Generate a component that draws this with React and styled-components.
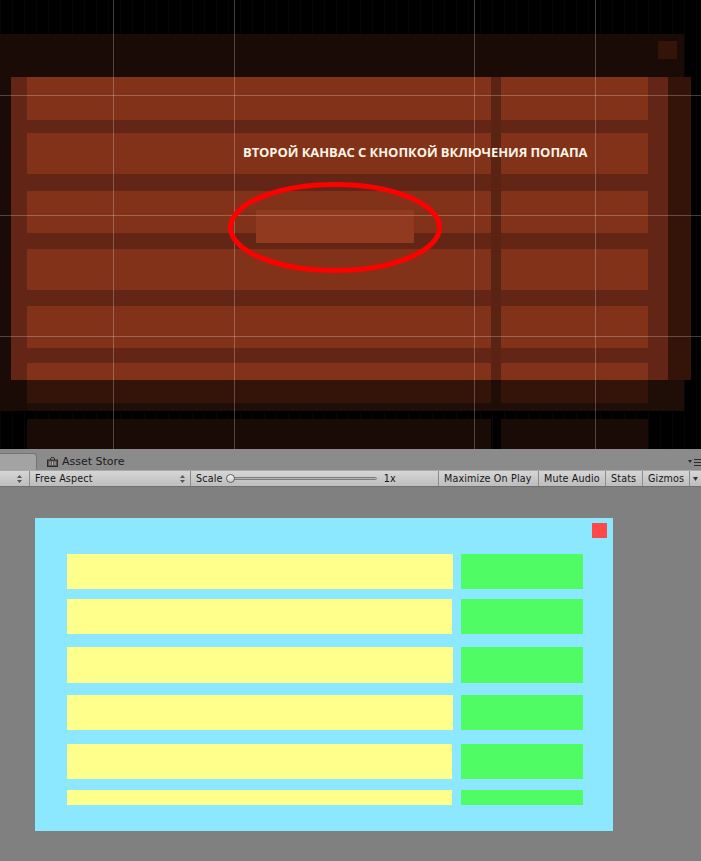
import React from 'react';
import styled, { createGlobalStyle } from 'styled-components';

const GlobalStyle = createGlobalStyle`
  html, body {
    margin: 0;
    padding: 0;
    background: #808080;
  }
  body {
    width: 701px;
    height: 861px;
    overflow: hidden;
    font-family: "DejaVu Sans", "Liberation Sans", sans-serif;
  }
`;

const Page = styled.div`
  display: flex;
  flex-direction: column;
  width: 701px;
  height: 861px;
`;

/* ---------- scene view (free canvas) ---------- */

const Scene = styled.div`
  position: relative;
  flex: none;
  height: 449px;
  background-color: #000;
  background-image: repeating-linear-gradient(90deg, rgba(255,255,255,0.025) 0 1px, transparent 1px 12px);
  overflow: hidden;
`;

const Layer = styled.div`
  position: absolute;
  left: ${p => p.$x}px;
  top: ${p => p.$y}px;
  width: ${p => p.$w}px;
  height: ${p => p.$h}px;
  background: ${p => p.$c};
`;

const SceneRows = styled.div`
  position: absolute;
  left: 27px;
  top: 77px;
  display: flex;
  flex-direction: column;
`;

const SceneRow = styled.div`
  display: flex;
  gap: 10px;
  height: ${p => p.$h}px;
  margin-top: ${p => p.$mt}px;
`;

const tones = {
  lit: '#813219',
  split: 'linear-gradient(#813219 0 17px, #341409 17px)',
  dim: '#1a0b07',
};

const SceneCell = styled.div`
  width: ${p => p.$w}px;
  background: ${p => tones[p.$tone]};
`;

const SceneButton = styled.div`
  position: absolute;
  left: 256px;
  top: 210px;
  width: 158px;
  height: 33px;
  background: #923a1f;
`;

const Caption = styled.div`
  position: absolute;
  left: 243px;
  top: 143px;
  font-family: "Open Sans", "Noto Sans", sans-serif;
  font-weight: 700;
  font-size: 13px;
  letter-spacing: -0.08px;
  line-height: 18px;
  color: #fff4e4;
  white-space: nowrap;
`;

const Overlay = styled.svg`
  position: absolute;
  left: 0;
  top: 0;
  pointer-events: none;
`;

const sceneRows = [
  { h: 43, mt: 0, tone: 'lit' },
  { h: 41, mt: 13, tone: 'lit' },
  { h: 42, mt: 17, tone: 'lit' },
  { h: 41, mt: 16, tone: 'lit' },
  { h: 42, mt: 16, tone: 'lit' },
  { h: 40, mt: 15, tone: 'split' },
  { h: 40, mt: 16, tone: 'dim' },
];

/* ---------- editor tabs and toolbar ---------- */

const TabBar = styled.div`
  position: relative;
  flex: none;
  display: flex;
  align-items: flex-end;
  height: 21px;
  background: #8b8b8b;
`;

const Tab = styled.div`
  display: flex;
  align-items: center;
  gap: 4px;
  height: 17px;
  box-sizing: border-box;
  padding: 0 ${p => p.$pad}px;
  width: ${p => (p.$w ? `${p.$w}px` : 'auto')};
  background: ${p => (p.$active ? '#a3a3a3' : 'transparent')};
  border: ${p => (p.$active ? '1px solid #747474' : 'none')};
  border-left: none;
  border-bottom: none;
  border-top-right-radius: 4px;
  font-size: 11px;
  color: #1b1b1b;
`;

const TabMenu = styled.div`
  position: absolute;
  right: 0;
  top: 10px;
  display: flex;
  align-items: center;
`;

const Toolbar = styled.div`
  flex: none;
  display: flex;
  align-items: stretch;
  height: 17px;
  box-sizing: border-box;
  background: linear-gradient(#d6d6d6, #bdbdbd);
  border-top: 1px solid #a9a9a9;
  border-bottom: 1px solid #6f6f6f;
  font-size: 9.6px;
  letter-spacing: 0.15px;
  color: #151515;
`;

const ToolItem = styled.div`
  display: flex;
  align-items: center;
  justify-content: ${p => p.$justify || 'flex-start'};
  gap: 4px;
  width: ${p => p.$w}px;
  flex: none;
  box-sizing: border-box;
  padding: 0 ${p => p.$pad ?? 5}px;
  border-right: ${p => (p.$sep ? '1px solid #8c8c8c' : 'none')};
  white-space: nowrap;
  overflow: hidden;
`;

const Grow = styled.div`
  flex: 1;
`;

const SliderTrack = styled.div`
  position: relative;
  width: 150px;
  height: 3px;
  border-radius: 2px;
  background: linear-gradient(#8a8a8a, #d8d8d8);
  border: 1px solid #7c7c7c;
  box-sizing: border-box;
`;

const Knob = styled.div`
  position: absolute;
  left: -2px;
  top: -4px;
  width: 9px;
  height: 9px;
  border-radius: 50%;
  box-sizing: border-box;
  border: 1px solid #5d5d5d;
  background: linear-gradient(#f4f4f4, #c9c9c9);
`;

/* ---------- game view ---------- */

const GameView = styled.div`
  flex: 1;
  background: #808080;
  padding: 31px 0 0 35px;
`;

const Panel = styled.div`
  position: relative;
  width: 578px;
  height: 313px;
  box-sizing: border-box;
  padding: 36px 0 0 32px;
  background: #8be8ff;
  overflow: hidden;
`;

const CloseButton = styled.div`
  position: absolute;
  top: 5px;
  right: 6px;
  width: 15px;
  height: 15px;
  background: #ff4848;
`;

const RowList = styled.div`
  display: flex;
  flex-direction: column;
  width: 516px;
`;

const Row = styled.div`
  display: flex;
  justify-content: space-between;
  height: ${p => p.$h}px;
  margin-top: ${p => p.$mt}px;
`;

const Label = styled.div`
  width: ${p => p.$w}px;
  background: #ffff8c;
`;

const Action = styled.div`
  width: 122px;
  background: #50fc64;
`;

const rows = [
  { h: 35, mt: 0, w: 386 },
  { h: 35, mt: 10, w: 385 },
  { h: 36, mt: 13, w: 386 },
  { h: 35, mt: 12, w: 386 },
  { h: 35, mt: 14, w: 385 },
  { h: 15, mt: 11, w: 385 },
];

const UpDown = () => (
  <svg width="5" height="8" viewBox="0 0 5 8">
    <path d="M0 3 L2.5 0 L5 3 Z M0 5 L2.5 8 L5 5 Z" fill="#555" />
  </svg>
);

const StoreIcon = () => (
  <svg width="11" height="10" viewBox="0 0 11 10">
    <path d="M3.5 3 V1.5 Q3.5 0.5 5.5 0.5 Q7.5 0.5 7.5 1.5 V3" fill="none" stroke="#2a2a2a" strokeWidth="1" />
    <rect x="0.5" y="3" width="10" height="6.5" fill="#5a5a5a" stroke="#2a2a2a" />
    <path d="M3 4.5 V8 M5.5 4.5 V8 M8 4.5 V8" stroke="#b5b5b5" strokeWidth="1" />
  </svg>
);

const MenuIcon = () => (
  <svg width="13" height="7" viewBox="0 0 13 7">
    <path d="M0 1 L4 1 L2 4 Z" fill="#2b2b2b" />
    <path d="M6 0.5 H13 M6 3.5 H13 M6 6.5 H13" stroke="#2b2b2b" strokeWidth="1" />
  </svg>
);

export default function App() {
  return (
    <Page>
      <GlobalStyle />
      <Scene>
        <Layer $x={0} $y={34} $w={684} $h={377} $c="#1a0b07" />
        <Layer $x={27} $y={380} $w={657} $h={31} $c="#1f0d08" />
        <Layer $x={668} $y={77} $w={23} $h={303} $c="#341409" />
        <Layer $x={658} $y={41} $w={19} $h={18} $c="#341409" />
        <Layer $x={11} $y={77} $w={657} $h={303} $c="#632616" />
        <Layer $x={491} $y={77} $w={10} $h={303} $c="#5b2314" />
        <SceneRows>
          {sceneRows.map((r, i) => (
            <SceneRow key={i} $h={r.h} $mt={r.mt}>
              <SceneCell $w={464} $tone={r.tone} />
              <SceneCell $w={147} $tone={r.tone} />
            </SceneRow>
          ))}
        </SceneRows>
        <SceneButton />
        <Caption>ВТОРОЙ КАНВАС С КНОПКОЙ ВКЛЮЧЕНИЯ ПОПАПА</Caption>
        <Overlay width="701" height="449" viewBox="0 0 701 449">
          <g stroke="rgba(255,255,255,0.24)" strokeWidth="1">
            <path d="M113.5 0 V449 M234.5 0 V449 M474.5 0 V449 M595.5 0 V449" />
            <path d="M0 95.5 H701 M0 215.5 H701 M0 336.5 H701" />
          </g>
          <ellipse cx="335" cy="227.5" rx="104.5" ry="43" fill="none" stroke="#ff0000" strokeWidth="5" />
        </Overlay>
      </Scene>

      <TabBar>
        <Tab $active $w={37} $pad={0} />
        <Tab $pad={10}>
          <StoreIcon />
          Asset Store
        </Tab>
        <TabMenu>
          <MenuIcon />
        </TabMenu>
      </TabBar>

      <Toolbar>
        <ToolItem $w={30} $sep $justify="flex-end" $pad={7}>
          <UpDown />
        </ToolItem>
        <ToolItem $w={161} $sep>
          Free Aspect
          <Grow />
          <UpDown />
        </ToolItem>
        <ToolItem $w={248} $sep>
          Scale
          <SliderTrack>
            <Knob />
          </SliderTrack>
          <span>&nbsp;1x</span>
        </ToolItem>
        <ToolItem $w={100} $sep>Maximize On Play</ToolItem>
        <ToolItem $w={67} $sep>Mute Audio</ToolItem>
        <ToolItem $w={37} $sep>Stats</ToolItem>
        <ToolItem $w={47} $sep>Gizmos</ToolItem>
        <ToolItem $w={11} $pad={3}>
          <svg width="5" height="4" viewBox="0 0 5 4">
            <path d="M0 0 L5 0 L2.5 4 Z" fill="#333" />
          </svg>
        </ToolItem>
      </Toolbar>

      <GameView>
        <Panel>
          <CloseButton />
          <RowList>
            {rows.map((r, i) => (
              <Row key={i} $h={r.h} $mt={r.mt}>
                <Label $w={r.w} />
                <Action />
              </Row>
            ))}
          </RowList>
        </Panel>
      </GameView>
    </Page>
  );
}
